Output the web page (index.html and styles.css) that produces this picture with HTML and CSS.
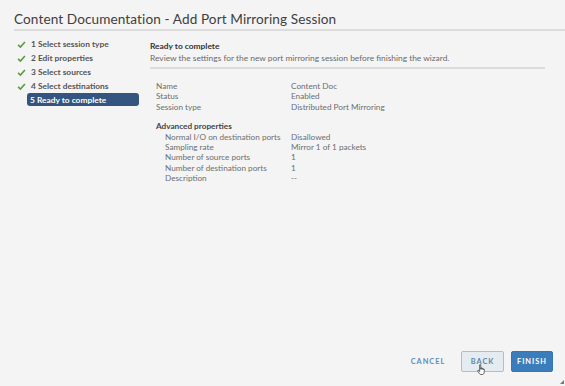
FILE: index.html
```html
<!DOCTYPE html>
<html>
<head>
<meta charset="utf-8">
<link rel="stylesheet" href="styles.css">
</head>
<body>
<div class="dialog">
  <h1 class="title">Content Documentation - Add Port Mirroring Session</h1>
  <div class="body">
    <ul class="steps">
      <li class="step done"><svg class="check" viewBox="0 0 10 10"><path d="M1.2 5.4 L3.8 7.9 L8.8 2.2" fill="none" stroke="#5c9c3f" stroke-width="1.8"/></svg><span>1 Select session type</span></li>
      <li class="step done"><svg class="check" viewBox="0 0 10 10"><path d="M1.2 5.4 L3.8 7.9 L8.8 2.2" fill="none" stroke="#5c9c3f" stroke-width="1.8"/></svg><span>2 Edit properties</span></li>
      <li class="step done"><svg class="check" viewBox="0 0 10 10"><path d="M1.2 5.4 L3.8 7.9 L8.8 2.2" fill="none" stroke="#5c9c3f" stroke-width="1.8"/></svg><span>3 Select sources</span></li>
      <li class="step done"><svg class="check" viewBox="0 0 10 10"><path d="M1.2 5.4 L3.8 7.9 L8.8 2.2" fill="none" stroke="#5c9c3f" stroke-width="1.8"/></svg><span>4 Select destinations</span></li>
      <li class="step active"><span>5 Ready to complete</span></li>
    </ul>
    <div class="main">
      <div class="head">
        <div class="head-title">Ready to complete</div>
        <div class="head-desc">Review the settings for the new port mirroring session before finishing the wizard.</div>
      </div>
      <div class="props">
        <div class="row"><span class="k">Name</span><span class="v">Content Doc</span></div>
        <div class="row"><span class="k">Status</span><span class="v">Enabled</span></div>
        <div class="row"><span class="k">Session type</span><span class="v">Distributed Port Mirroring</span></div>
        <div class="section">Advanced properties</div>
        <div class="row sub"><span class="k">Normal I/O on destination ports</span><span class="v">Disallowed</span></div>
        <div class="row sub"><span class="k">Sampling rate</span><span class="v">Mirror 1 of 1 packets</span></div>
        <div class="row sub"><span class="k">Number of source ports</span><span class="v">1</span></div>
        <div class="row sub"><span class="k">Number of destination ports</span><span class="v">1</span></div>
        <div class="row sub"><span class="k">Description</span><span class="v">--</span></div>
      </div>
    </div>
  </div>
  <div class="footer">
    <button class="btn link">CANCEL</button>
    <button class="btn outline">BACK
      <svg class="cursor" viewBox="0 0 12 16"><path d="M3.5 1.2 C3.5 0.5 5 0.5 5 1.2 L5 7 L5.2 5.6 C5.3 4.9 6.6 4.9 6.6 5.7 L6.6 7.2 L6.8 6.2 C6.9 5.5 8.2 5.5 8.2 6.3 L8.2 7.6 L8.4 6.9 C8.6 6.3 9.7 6.4 9.7 7.1 L9.7 10.5 C9.7 12.5 8.6 14 6.8 14 L5.3 14 C4 14 3.4 13 2.6 11.9 L1 9.4 C0.6 8.7 1.5 8 2.2 8.6 L3.5 10 Z" fill="#fff" stroke="#222" stroke-width="0.9" stroke-linejoin="round"/></svg>
    </button>
    <button class="btn primary">FINISH</button>
  </div>
  <div class="grip"></div>
</div>
</body>
</html>
```

FILE: styles.css
```css
* { box-sizing: border-box; }
html, body { margin: 0; padding: 0; }
body {
  width: 565px;
  height: 386px;
  background: #f4f4f4;
  font-family: Lato, "Open Sans", sans-serif;
  color: #333;
  overflow: hidden;
}
.dialog {
  position: relative;
  height: 386px;
  display: flex;
  flex-direction: column;
  padding: 0 0 0 14px;
}
.title {
  margin: 0;
  padding-top: 11px;
  height: 31px;
  font-weight: 400;
  font-size: 13.6px;
  letter-spacing: 0.1px;
  color: #404040;
  border-bottom: 2px solid #dcdcdc;
}
.body {
  display: flex;
  flex: 1;
}
.steps {
  list-style: none;
  margin: 0;
  padding: 6px 0 0 0;
  width: 125px;
  flex: none;
}
.step {
  display: flex;
  align-items: center;
  height: 14px;
  font-size: 8.4px;
  font-weight: 700;
  color: #555;
  white-space: nowrap;
}
.check {
  width: 9px;
  height: 9px;
  margin: 0 5px 0 3px;
}
.step.active {
  margin-left: 13px;
  width: 112px;
  height: 13px;
  background: #33557f;
  color: #fff;
  border-radius: 3px;
  padding-left: 3px;
}
.main {
  flex: 1;
  padding-left: 11px;
  padding-right: 20px;
}
.head {
  padding-top: 9px;
  height: 38px;
  border-bottom: 2px solid #dcdcdc;
}
.head-title {
  font-size: 8.4px;
  font-weight: 700;
  color: #333;
  line-height: 12px;
}
.head-desc {
  font-size: 8.4px;
  color: #6a6a6a;
  line-height: 12px;
}
.props {
  padding: 12px 0 0 6px;
  font-size: 8.2px;
  color: #6e6e6e;
}
.row {
  display: flex;
  height: 10.4px;
  line-height: 10.4px;
}
.row .k { width: 135px; flex: none; }
.row.sub .k { padding-left: 9px; width: 135px; }
.section {
  margin-top: 9px;
  font-weight: 700;
  color: #444;
  height: 10.4px;
  line-height: 10.4px;
}
.footer {
  display: flex;
  justify-content: flex-end;
  align-items: center;
  gap: 7px;
  padding: 0 12px 14px 0;
}
.btn {
  position: relative;
  height: 21px;
  font-family: inherit;
  font-size: 7.4px;
  font-weight: 700;
  letter-spacing: 1px;
  border-radius: 2px;
  padding: 0;
  cursor: pointer;
}
.btn.link {
  background: none;
  border: none;
  color: #5b8fb9;
  width: 44px;
  margin-right: 4px;
}
.btn.outline {
  width: 43px;
  background: #e4ebf1;
  border: 1px solid #a6c0d4;
  color: #5d86a8;
}
.btn.primary {
  width: 42px;
  background: #3b7dba;
  border: 1px solid #3675b0;
  color: #fff;
}
.cursor {
  position: absolute;
  left: 15px;
  top: 12px;
  width: 9px;
  height: 12px;
}
.grip {
  position: absolute;
  right: 1px;
  bottom: 2px;
  width: 0;
  height: 0;
  border-left: 4px solid transparent;
  border-bottom: 4px solid #777;
}
```
